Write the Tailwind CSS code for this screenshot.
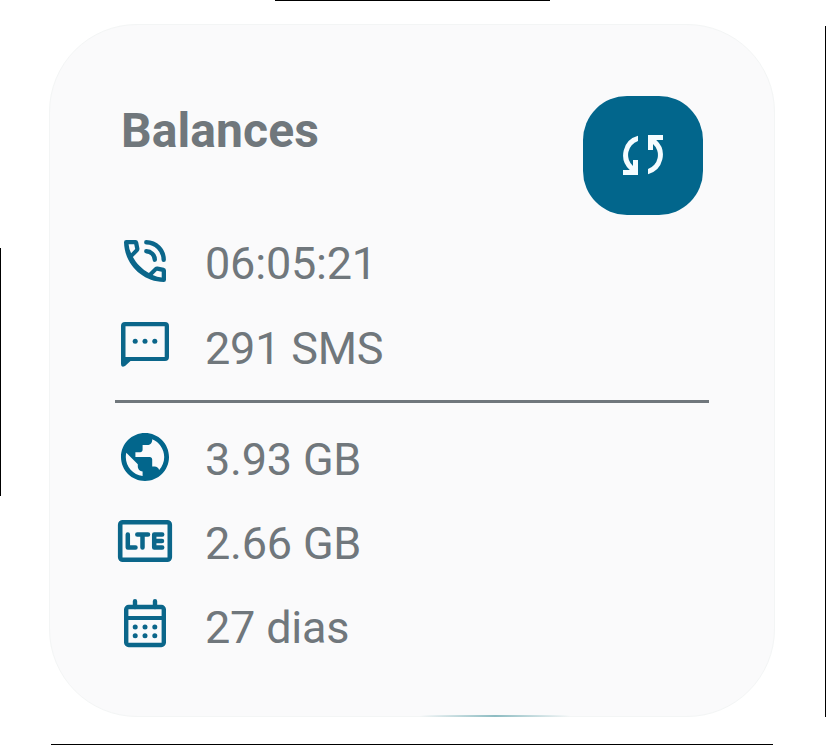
<!DOCTYPE html>
<html lang="pt">
<head>
<meta charset="utf-8">
<title>Balances</title>
<script src="https://cdn.jsdelivr.net/npm/@tailwindcss/browser@4"></script>
</head>
<body class="bg-white">
<div class="relative w-[826px] h-[745px] overflow-hidden bg-white pt-6 pl-[49px] font-[Roboto,sans-serif]">
  <div class="absolute top-0 left-[275px] w-[275px] h-px bg-black"></div>
  <div class="absolute top-[248px] left-0 w-px h-[248px] bg-black"></div>
  <div class="absolute top-[26px] left-[825px] w-px h-[691px] bg-black"></div>
  <div class="absolute top-[744px] left-[51px] w-[722px] h-px bg-black"></div>

  <main class="relative w-[726px] h-[693px] rounded-[88px] bg-[#fafafb] border border-[#f3f5f5] text-[#70777c] pt-[70px] pl-[65px]">
    <div class="absolute left-[370px] bottom-[-1px] w-[150px] h-[2px] bg-linear-to-r from-transparent via-[#8dbcc2] to-transparent"></div>
    <header class="flex justify-between items-start w-[588px] h-[136px] pl-[6px]">
      <h1 class="text-[48px] leading-[56px] tracking-[0.1px] font-bold mt-[8px]">Balances</h1>
      <button aria-label="Sync" class="flex items-center justify-center w-[120px] h-[119px] pb-px rounded-[44px] bg-[#02668c] mt-px">
        <svg class="size-10" viewBox="0 0 40 40" fill="#f5fcff">
          <path d="M15 .8V6A14.800 14.800 0 0 0 10 31V25H15V40H0V35H6.800A20 20 0 0 1 15 .8Z"/>
          <path d="M15 .8V6A14.800 14.800 0 0 0 10 31V25H15V40H0V35H6.800A20 20 0 0 1 15 .8Z" transform="rotate(180 20 20)"/>
        </svg>
      </button>
    </header>
    <ul class="text-[45px] leading-[60px] tracking-[-0.2px] text-[#70777c]">
      <li class="flex h-[84px] gap-[30px]">
        <svg class="size-[60px]" viewBox="0 0 60 60" fill="none" stroke="#0b668a" stroke-width="4.400" stroke-linecap="round">
          <path fill="#0b668a" fill-rule="evenodd" stroke="none" d="M11.300 9H20.500Q22.700 9 23.200 11.200L24.400 17.300Q24.700 19.200 23.400 20.500L17.900 26.100C21.200 32.300 27.400 38.700 33.900 42.100L39.500 36.600Q40.800 35.300 42.700 35.600L48.800 36.800Q51 37.300 51 39.500V48.700Q51 51 48.700 51C27 50.500 9.500 33 9 11.300Q9 9 11.300 9ZM13.600 13.300Q13.900 17.800 16.100 22.300L20.200 18.100L19.200 13.300ZM46.700 46.400V40.800L41.900 39.800L37.700 43.900Q42.200 46.100 46.700 46.400Z"/>
          <path d="M31.300 11.300A17.500 17.500 0 0 1 48.700 28.700M31.300 20.200A8.600 8.600 0 0 1 39.800 28.700"/>
        </svg><span class="mt-[3px]">06:05:21</span>
      </li>
      <li class="flex h-[84px] gap-[30px]">
        <svg class="size-[60px]" viewBox="0 0 60 60" fill="#0b668a">
          <path fill-rule="evenodd" d="M10 7H50Q54 7 54 11V42Q54 46 50 46H15.500L10 51Q6 53 6 49V11Q6 7 10 7ZM10.500 11.300V42H49.700V11.300Z"/>
          <circle cx="20.200" cy="26.300" r="2.500"/><circle cx="30" cy="26.300" r="2.500"/><circle cx="39.800" cy="26.300" r="2.500"/>
        </svg><span class="mt-[3.500px]">291 SMS</span>
      </li>
    </ul>
    <hr class="w-[594px] h-[3px] border-0 bg-[#70777c] mt-[1px]">
    <ul class="text-[45px] leading-[60px] tracking-[-0.2px] text-[#70777c] mt-[24px]">
      <li class="flex h-[84px] gap-[30px]">
        <svg class="size-[60px]" viewBox="0 0 60 60" fill="#02668c">
          <g transform="translate(1.200 1.200) scale(2.400)"><path d="M12 2C6.480 2 2 6.480 2 12s4.480 10 10 10 10-4.480 10-10S17.520 2 12 2zm-1 17.930c-3.950-.49-7-3.850-7-7.930 0-.62.080-1.210.21-1.790L9 15v1c0 1.100.9 2 2 2v1.930zm6.900-2.540c-.26-.81-1-1.390-1.900-1.390h-1v-3c0-.55-.45-1-1-1H8v-2h2c.55 0 1-.45 1-1V7h2c1.100 0 2-.9 2-2v-.41c2.930 1.190 5 4.060 5 7.410 0 2.080-.8 3.970-2.100 5.390z"/></g>
        </svg><span class="mt-[3px]">3.93 GB</span>
      </li>
      <li class="flex h-[84px] gap-[30px]">
        <svg class="size-[60px]" viewBox="0 0 60 60" fill="none" stroke="#0b668a" stroke-width="4.600">
          <rect x="5.200" y="11.200" width="49.600" height="37.600" rx="2.500"/>
          <path d="M12.800 23.500V36.500H20.500M22.300 23.500H33M27.500 23.500V36.500M47.200 23.500H39.200V36.500H47.200M39.200 30H47" stroke-width="4.500" stroke-linecap="round" stroke-linejoin="round"/>
        </svg><span class="mt-[3px]">2.66 GB</span>
      </li>
      <li class="flex h-[84px] gap-[30px]">
        <svg class="size-[60px]" viewBox="0 0 60 60" fill="none" stroke="#0b668a" stroke-width="4.400">
          <rect x="11.200" y="12" width="37.600" height="38" rx="2.500"/>
          <path d="M10 23H50" stroke-width="4"/>
          <path d="M20 12V6.200M40 12V6.200" stroke-linecap="round"/>
          <g fill="#0b668a" stroke="none"><circle cx="20.200" cy="32" r="2.500"/><circle cx="30" cy="32" r="2.500"/><circle cx="39.800" cy="32" r="2.500"/><circle cx="20.200" cy="40.800" r="2.500"/><circle cx="30" cy="40.800" r="2.500"/><circle cx="39.800" cy="40.800" r="2.500"/></g>
        </svg><span class="mt-[3px]">27 dias</span>
      </li>
    </ul>
  </main>
</div>
</body>
</html>
